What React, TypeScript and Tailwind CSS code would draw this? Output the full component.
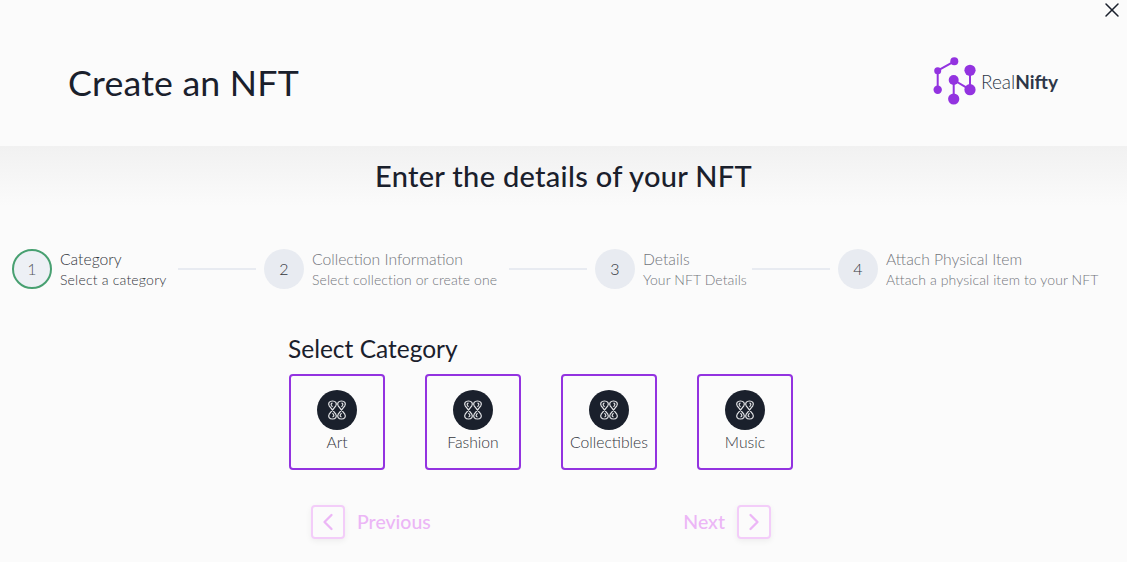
import { ChevronLeft, ChevronRight, X } from "lucide-react";

const steps = [
  { n: 1, title: "Category", sub: "Select a category", width: "w-[110px]", active: true },
  { n: 2, title: "Collection Information", sub: "Select collection or create one", width: "w-[189px]", active: false },
  { n: 3, title: "Details", sub: "Your NFT Details", width: "w-[101px]", active: false },
  { n: 4, title: "Attach Physical Item", sub: "Attach a physical item to your NFT", width: "w-[214px]", active: false },
];

const categories = ["Art", "Fashion", "Collectibles", "Music"];

function Logo() {
  return (
    <svg width="48" height="50" viewBox="0 0 48 50" fill="none" className="shrink-0">
      <g stroke="#9333e0" strokeWidth="2">
        <path d="M23.3 6.3 6.7 15.7V34.7" />
        <path d="M22.7 25V44" />
        <path d="M22.7 25 39 34.7V15.3" />
      </g>
      <g fill="#9333e0">
        <circle cx="23.3" cy="6.3" r="4" />
        <circle cx="6.7" cy="15.7" r="3.5" />
        <circle cx="6.7" cy="34.7" r="4.2" />
        <circle cx="39" cy="15.3" r="5.6" />
        <circle cx="22.7" cy="25" r="5" />
        <circle cx="39" cy="34.7" r="5.6" />
        <circle cx="22.7" cy="44" r="5.6" />
      </g>
    </svg>
  );
}

function KnotIcon() {
  return (
    <svg width="20" height="20" viewBox="0 0 20 20" fill="none" stroke="#e2e3e6" strokeWidth="1.2">
      <path d="M5.500 1C2.500 1 .700 3.300 2.200 5.800L8.800 14.200C10.300 16.700 8.500 19 5.500 19S.700 16.700 2.200 14.200L8.800 5.800C10.300 3.300 8.500 1 5.500 1Z" />
      <path d="M14.500 1C11.500 1 9.700 3.300 11.200 5.800L17.800 14.200C19.300 16.700 17.500 19 14.500 19S9.700 16.700 11.200 14.200L17.800 5.800C19.300 3.300 17.500 1 14.500 1Z" />
      <path d="M5.500 3.200C4.200 3.200 3.800 4.500 4.500 5.500L5.500 6.800" />
      <path d="M14.500 3.200C15.800 3.200 16.200 4.500 15.500 5.500L14.500 6.800" />
      <path d="M5.500 16.800C6.800 16.800 7.200 15.500 6.500 14.500L5.500 13.200" />
      <path d="M14.500 16.800C13.200 16.800 12.800 15.500 13.500 14.500L14.500 13.200" />
    </svg>
  );
}

export default function App() {
  return (
    <div className="relative flex h-[562px] w-[1127px] flex-col overflow-hidden bg-[#fbfbfb] font-['Lato',sans-serif] text-[#1a202c]">
      <button className="absolute right-[3px] top-[-2px] text-[#1a202c]">
        <X size={24} strokeWidth={1.5} />
      </button>

      <header className="flex h-[146px] shrink-0 items-center justify-between pl-[68px] pr-[67px] pt-[20px]">
        <h1 className="text-[35.7px] font-normal leading-none tracking-[0.2px]">Create an NFT</h1>
        <div className="mt-[-6px] flex items-center gap-[2px]">
          <Logo />
          <span className="mt-[3px] w-[79px] whitespace-nowrap text-[19px] font-light leading-none text-[#2d3748]">
            Real<span className="font-bold">Nifty</span>
          </span>
        </div>
      </header>

      <main className="flex-1 bg-[linear-gradient(to_bottom,#f1f1f1,#fbfbfb_60px)]">
        <h2 className="pt-[12px] text-center text-[29px] font-medium leading-[36px] tracking-[0.3px]">
          Enter the details of your NFT
        </h2>

        <div className="mt-[54px] flex items-center gap-2 pl-[12px]">
          {steps.map((s, i) => (
            <div key={s.n} className="flex items-center gap-2">
              <div
                className={
                  s.active
                    ? "flex h-10 w-10 shrink-0 items-center justify-center rounded-full border-2 border-[#48a071] bg-[#edf0f5] text-[16px] font-light text-[#55585e]"
                    : "flex h-10 w-10 shrink-0 items-center justify-center rounded-full bg-[#e8ebf1] text-[16px] font-light text-[#33363c]"
                }
              >
                {s.n}
              </div>
              <div className={s.width + " shrink-0 whitespace-nowrap font-light"}>
                <div className={s.active ? "text-[15.7px] leading-[22px] text-[#33363c]" : "text-[15.7px] leading-[22px] text-[#73767c]"}>
                  {s.title}
                </div>
                <div className={s.active ? "text-[14px] leading-[20px] tracking-[0.2px] text-[#33363c]" : "text-[14px] leading-[20px] tracking-[0.1px] text-[#73767c]"}>
                  {s.sub}
                </div>
              </div>
              {i < steps.length - 1 && <div className="h-[2px] w-[78px] bg-[#e8ebf1]" />}
            </div>
          ))}
        </div>

        <div className="ml-[288px] mt-[45px] w-[510px]">
          <h3 className="text-[24.500px] font-normal leading-[28px]">Select Category</h3>
          <div className="ml-px mt-[11px] flex gap-10">
            {categories.map((c) => (
              <div
                key={c}
                className="flex h-24 w-24 flex-col items-center rounded-[4px] border-2 border-[#9333e0] pt-[14px]"
              >
                <div className="flex h-10 w-10 items-center justify-center rounded-full bg-[#1a202c]">
                  <KnotIcon />
                </div>
                <span className="whitespace-nowrap text-[15.7px] font-light leading-[24px] text-[#33363c]">{c}</span>
              </div>
            ))}
          </div>
        </div>

        <div className="ml-[311px] mt-[35px] flex w-[460px] items-center justify-between text-[19.500px] font-medium text-[#ecb6f6]">
          <div className="flex items-center gap-3">
            <span className="flex h-[34px] w-[34px] items-center justify-center rounded-[4px] border-2 border-[#f3cdf9] shadow-[0_2px_6px_rgba(0,0,0,0.06)]">
              <ChevronLeft size={28} strokeWidth={2} />
            </span>
            Previous
          </div>
          <div className="flex items-center gap-3">
            Next
            <span className="flex h-[34px] w-[34px] items-center justify-center rounded-[4px] border-2 border-[#f3cdf9] shadow-[0_2px_6px_rgba(0,0,0,0.06)]">
              <ChevronRight size={28} strokeWidth={2} />
            </span>
          </div>
        </div>
      </main>
    </div>
  );
}
